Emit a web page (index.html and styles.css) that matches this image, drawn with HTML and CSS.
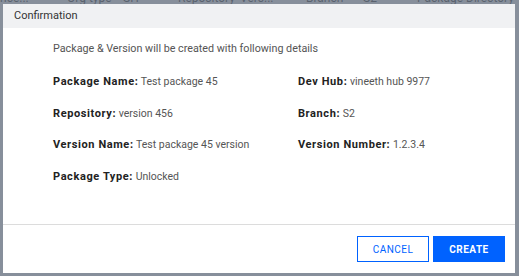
FILE: index.html
```html
<!DOCTYPE html>
<html lang="en">
<head>
  <meta charset="UTF-8">
  <meta name="viewport" content="width=device-width, initial-scale=1.0">
  <title>Confirmation</title>
  <link rel="stylesheet" href="styles.css">
</head>
<body>
  <!-- Page behind the modal -->
  <div class="page">
    <div class="table-head">
      <span class="col c1">nce...</span>
      <span class="col c2">Org type</span>
      <span class="col c3">SH</span>
      <span class="col c4">Repository</span>
      <span class="col c5">Vers...</span>
      <span class="col c6">Branch</span>
      <span class="col c7">S2</span>
      <span class="col c8">Package Directory</span>
    </div>
  </div>
  <div class="backdrop"></div>

  <!-- Modal -->
  <div class="modal">
    <header class="modal-header">Confirmation</header>

    <div class="modal-body">
      <p class="intro">Package &amp; Version will be created with following details</p>
      <div class="details">
        <div class="detail"><b>Package Name:</b> Test package 45</div>
        <div class="detail"><b>Dev Hub:</b> vineeth hub 9977</div>
        <div class="detail"><b>Repository:</b> version 456</div>
        <div class="detail"><b>Branch:</b> S2</div>
        <div class="detail"><b>Version Name:</b> Test package 45 version</div>
        <div class="detail"><b>Version Number:</b> 1.2.3.4</div>
        <div class="detail"><b>Package Type:</b> Unlocked</div>
      </div>
    </div>

    <footer class="modal-footer">
      <button class="btn btn-outline">CANCEL</button>
      <button class="btn btn-primary">CREATE</button>
    </footer>
  </div>
</body>
</html>
```

FILE: styles.css
```css
* {
  box-sizing: border-box;
  margin: 0;
  padding: 0;
}

body {
  font-family: Roboto, 'Liberation Sans', Arial, sans-serif;
  background-color: #fff;
  color: #333;
  width: 519px;
  height: 276px;
  overflow: hidden;
  position: relative;
}

.page {
  height: 276px;
}

.table-head {
  display: flex;
  margin-top: -8px;
  font-size: 12px;
  line-height: 12px;
  color: #222;
  white-space: nowrap;
}

.col { display: inline-block; }
.c1 { width: 67px; }
.c2 { width: 56px; }
.c3 { width: 55px; }
.c4 { width: 62px; }
.c5 { width: 66px; }
.c6 { width: 57px; }
.c7 { width: 54px; }

.backdrop {
  position: absolute;
  inset: 0;
  background-color: rgba(105, 115, 130, 0.8);
}

.modal {
  position: absolute;
  top: 4px;
  left: 3px;
  width: 512px;
  height: 269px;
  background-color: #fff;
  display: flex;
  flex-direction: column;
}

.modal-header {
  height: 24px;
  background-color: #f0f1f3;
  padding: 5px 11px 0;
  font-size: 11px;
  line-height: 14px;
  color: #333;
}

.modal-body {
  flex: 1;
  padding: 14px 0 0 50px;
  border-bottom: 1px solid #dcdcdc;
}

.intro {
  font-size: 10.75px;
  line-height: 14px;
  color: #555;
  margin-bottom: 19px;
}

.details {
  display: grid;
  grid-template-columns: 245px 1fr;
  row-gap: 17.7px;
}

.detail {
  font-size: 10.5px;
  line-height: 14px;
  color: #555;
}

.detail b {
  font-size: 11px;
  letter-spacing: 0.6px;
  font-weight: 700;
  color: #222;
}

.modal-footer {
  display: flex;
  justify-content: flex-end;
  gap: 4px;
  padding: 11px 10px 11px 0;
}

.btn {
  width: 72px;
  height: 26px;
  font-family: inherit;
  font-size: 10px;
  letter-spacing: 0.5px;
  border: 1px solid #0062ff;
  cursor: pointer;
}

.btn-outline {
  background-color: #fff;
  color: #0062ff;
}

.btn-primary {
  background-color: #0062ff;
  color: #fff;
  font-weight: 700;
}
```
